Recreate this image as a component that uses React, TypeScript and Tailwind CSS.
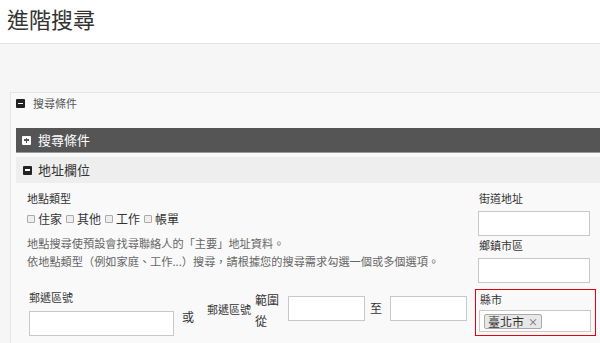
import React from "react";

const font = {
  fontFamily: '"Noto Sans CJK TC", "Noto Sans", sans-serif',
};

function MinusBox({ className = "" }: { className?: string }) {
  return (
    <span
      className={`inline-flex items-center justify-center w-[9px] h-[9px] rounded-[1px] bg-[#222] ${className}`}
    >
      <span className="block w-[5px] h-[1.5px] bg-white" />
    </span>
  );
}

function PlusBox() {
  return (
    <span className="relative inline-flex items-center justify-center w-[9px] h-[9px] rounded-[1px] bg-white">
      <span className="absolute w-[5px] h-[1.5px] bg-[#555]" />
      <span className="absolute w-[1.5px] h-[5px] bg-[#555]" />
    </span>
  );
}

function Check({ label }: { label: string }) {
  return (
    <label className="flex items-center mr-[4px]">
      <span className="w-[8px] h-[8px] border border-[#aaa] rounded-[1px] bg-[#eee] mr-[3px]" />
      <span className="text-[12px] text-[#333]">{label}</span>
    </label>
  );
}

function Field({ w, h = 25 }: { w: number; h?: number }) {
  return (
    <div
      className="border border-[#c8c8c8] bg-white"
      style={{ width: w, height: h }}
    />
  );
}

export default function App() {
  return (
    <div
      className="w-[600px] h-[343px] overflow-hidden bg-white text-[#333]"
      style={font}
    >
      <header className="h-[44px] border-b border-[#e2e2e2] pl-[7px] pt-[3px]">
        <h1 className="text-[22px] leading-[30px] text-[#333]">進階搜尋</h1>
      </header>

      <main className="bg-[#f6f6f6] pt-[48px] pl-[10px] h-[299px]">
        <section className="bg-[#f9f9f9] border-l border-t border-[#e6e6e6] h-full">
          <div className="h-[21px] flex items-center pl-[5px]">
            <MinusBox />
            <span className="ml-[8px] text-[11px] text-[#555]">搜尋條件</span>
          </div>

          <div className="pl-[5px] pt-[14px]">
            <div className="h-[25px] bg-[#555] border-b border-[#999] flex items-center pl-[6px]">
              <PlusBox />
              <span className="ml-[7px] text-[13px] text-white">搜尋條件</span>
            </div>

            <div className="mt-[4px] h-[26px] bg-[#eeeeee] flex items-center pl-[7px]">
              <MinusBox />
              <span className="ml-[6px] text-[13px] text-[#333]">地址欄位</span>
            </div>

            <div className="flex">
              {/* left column */}
              <div className="w-[462px] pl-[11px] pt-[7px]">
                <div className="text-[11px] leading-[16px] text-[#333]">地點類型</div>
                <div className="mt-[5px] h-[16px] flex items-center">
                  <Check label="住家" />
                  <Check label="其他" />
                  <Check label="工作" />
                  <Check label="帳單" />
                </div>
                <p className="mt-[7px] text-[11.2px] leading-[18px] text-[#666]">
                  地點搜尋使預設會找尋聯絡人的「主要」地址資料。
                  <br />
                  依地點類型（例如家庭、工作...）搜尋，請根據您的搜尋需求勾選一個或多個選項。
                </p>

                <div className="mt-[19px] flex items-start">
                  <div className="ml-[2px]">
                    <div className="text-[11px] leading-[16px]">郵遞區號</div>
                    <div className="mt-[6px]">
                      <Field w={145} />
                    </div>
                  </div>
                  <span className="ml-[8px] mt-[18px] text-[12px] leading-[20px]">或</span>
                  <span className="ml-[13px] mt-[10px] text-[11px] leading-[20px]">郵遞區號</span>
                  <span className="ml-[4px] text-[12px] leading-[21px]">
                    範圍
                    <br />
                    從
                  </span>
                  <div className="ml-[9px] mt-[7px]">
                    <Field w={77} />
                  </div>
                  <span className="ml-[5px] mt-[9px] text-[12px] leading-[20px]">至</span>
                  <div className="ml-[8px] mt-[7px]">
                    <Field w={77} />
                  </div>
                </div>
              </div>

              {/* right column */}
              <div className="w-[112px] pt-[7px]">
                <div className="pl-[1px] text-[11px] leading-[16px]">街道地址</div>
                <div className="mt-[5px]">
                  <Field w={112} />
                </div>
                <div className="mt-[1px] pl-[1px] text-[11px] leading-[16px]">鄉鎮市區</div>
                <div className="mt-[5px]">
                  <Field w={112} h={25} />
                </div>
                <div className="mt-[6px] -ml-[3px] w-[121px] h-[47px] border-[1.5px] border-solid border-red-600 pl-[3px] pt-[1px]">
                  <div className="pl-[1px] text-[11px] leading-[16px]">縣市</div>
                  <div className="mt-[3px] w-[112px] h-[22px] border border-[#c8c8c8] bg-white flex items-center pl-[4px]">
                    <span className="h-[15px] flex items-center border border-[#aaa] rounded-[2px] bg-[#e8e8e8] px-[3px] text-[12px] leading-[13px] text-[#333]">
                      臺北市
                      <span className="ml-[4px] text-[10px] text-[#666]">×</span>
                    </span>
                  </div>
                </div>
              </div>
            </div>
          </div>
        </section>
      </main>
    </div>
  );
}
